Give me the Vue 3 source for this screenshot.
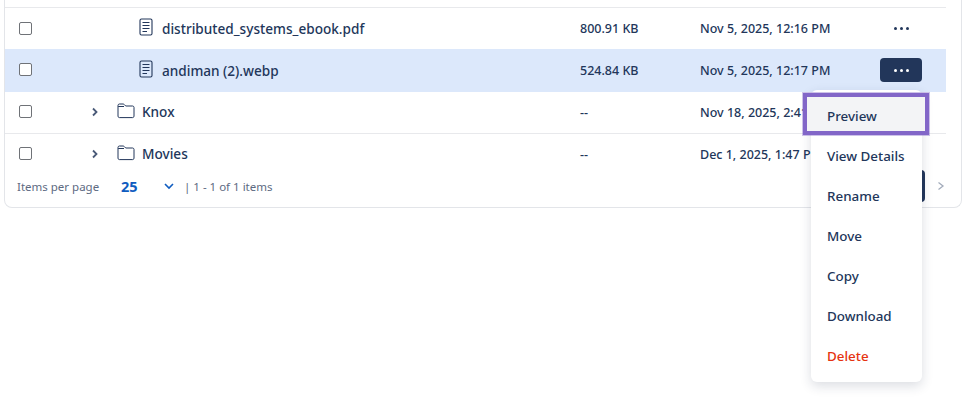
<template>
  <div class="page">
    <div class="card">
      <div class="rows">
        <div
          v-for="row in rows"
          :key="row.name"
          class="row"
          :class="{ selected: row.selected, folder: row.type === 'folder' }"
        >
          <span class="checkbox"></span>
          <div class="name-cell" :class="{ nested: row.type === 'file' }">
            <svg v-if="row.type === 'folder'" class="chevron" width="8" height="10" viewBox="0 0 8 10" fill="none">
              <path d="M2 1.5 5.5 5 2 8.5" stroke="#4a5a78" stroke-width="1.8" />
            </svg>
            <svg v-if="row.type === 'folder'" class="icon" width="18" height="16" viewBox="0 0 18 16" fill="none">
              <path d="M1 13.2V2.4C1 1.6 1.6 1 2.4 1h3.7c.4 0 .7.2 1 .4L8.7 3h6.9c.8 0 1.4.6 1.4 1.4v8.8c0 .8-.6 1.4-1.4 1.4H2.4c-.8 0-1.4-.6-1.4-1.4Z" stroke="#22365a" stroke-width="1" />
              <path d="M7 3.5H1.2" stroke="#22365a" stroke-width="1" />
            </svg>
            <svg v-else class="icon" width="14" height="18" viewBox="0 0 14 18" fill="none">
              <rect x="1" y="1" width="12" height="16" rx="1.5" stroke="#22365a" stroke-width="1.1" />
              <path d="M3.5 4.5h7M3.5 7.5h7M3.5 10.5h7M3.5 13.5h4.5" stroke="#22365a" stroke-width="1.1" />
            </svg>
            <span>{{ row.name }}</span>
          </div>
          <span class="size">{{ row.size }}</span>
          <span class="date">{{ row.date }}</span>
          <div class="actions">
            <button class="more" :class="{ active: row.selected }">
              <i></i><i></i><i></i>
            </button>
          </div>
        </div>
      </div>

      <div class="footer">
        <span class="per-page">Items per page</span>
        <span class="page-size">25</span>
        <svg class="select-arrow" width="12" height="8" viewBox="0 0 12 8" fill="none">
          <path d="M2 2 6 6 10 2" stroke="#0f5cc0" stroke-width="1.6" />
        </svg>
        <span class="count">| 1 - 1 of 1 items</span>
        <div class="pager">
          <span class="current"></span>
          <svg width="8" height="12" viewBox="0 0 8 12" fill="none">
            <path d="M1.5 2.5 6 6 1.5 9.5" stroke="#a3acbb" stroke-width="1.3" />
          </svg>
        </div>
      </div>
    </div>

    <ul class="menu">
      <li
        v-for="item in menuItems"
        :key="item"
        :class="{ hover: item === 'Preview', danger: item === 'Delete' }"
      >
        {{ item }}
      </li>
    </ul>
  </div>
</template>

<script setup>
const rows = [
  { name: 'distributed_systems_ebook.pdf', size: '800.91 KB', date: 'Nov 5, 2025, 12:16 PM', type: 'file' },
  { name: 'andiman (2).webp', size: '524.84 KB', date: 'Nov 5, 2025, 12:17 PM', type: 'file', selected: true },
  { name: 'Knox', size: '--', date: 'Nov 18, 2025, 2:41 PM', type: 'folder' },
  { name: 'Movies', size: '--', date: 'Dec 1, 2025, 1:47 PM', type: 'folder' }
]

const menuItems = ['Preview', 'View Details', 'Rename', 'Move', 'Copy', 'Download', 'Delete']
</script>

<style>
html,
body {
  background: #fff;
}
</style>

<style scoped>
.page {
  position: relative;
  width: 978px;
  height: 411px;
  overflow: hidden;
  font-family: "Noto Sans", "Liberation Sans", sans-serif;
  color: #22365a;
}

.card {
  width: 958px;
  height: 208px;
  margin-left: 4px;
  padding: 7px 15px 0 0;
  box-sizing: border-box;
  border: 1px solid #e3e5e9;
  border-top: 0;
  border-radius: 0 0 8px 8px;
}

.rows {
  border-top: 1px solid #e8e9ec;
}

.row {
  display: grid;
  grid-template-columns: 575px 120px 1fr 66px;
  height: 42px;
  box-sizing: border-box;
  align-items: center;
  position: relative;
  font-size: 13px;
  font-weight: 500;
}

.row:nth-child(1),
.row:nth-child(4) {
  height: 41px;
}

.row:nth-child(2) {
  height: 43px;
}

.row:nth-child(3) {
  border-bottom: 1px solid #e8e9ec;
}

.row.selected {
  background: #dce8fb;
}

.checkbox {
  position: absolute;
  left: 14px;
  top: 14px;
  width: 11px;
  height: 11px;
  border: 1px solid #6f7277;
  border-radius: 2px;
  background: #fff;
}

.row.folder .checkbox {
  top: 13px;
}

.name-cell {
  display: flex;
  align-items: center;
  padding-left: 86px;
  font-size: 13.6px;
}

.row.folder .name-cell {
  padding-bottom: 2px;
}

.name-cell.nested {
  padding-left: 134px;
}

.name-cell .chevron {
  margin-right: 18px;
}

.name-cell .icon {
  margin-right: 7px;
  position: relative;
  top: -1px;
}

.name-cell.nested .icon {
  margin-right: 9px;
  top: -2px;
}

.size {
  font-size: 12.5px;
}

.date {
  font-size: 12.5px;
  white-space: nowrap;
}

.actions {
  display: flex;
  justify-content: flex-start;
}

.more {
  width: 42px;
  height: 24px;
  display: flex;
  align-items: center;
  justify-content: center;
  gap: 3px;
  padding: 0;
  border: 0;
  border-radius: 4px;
  background: transparent;
  margin-top: -1px;
}

.more i {
  width: 3px;
  height: 3px;
  border-radius: 50%;
  background: #22365a;
}

.more.active {
  background: #22365a;
}

.more.active i {
  background: #fff;
}

.footer {
  display: flex;
  align-items: center;
  height: 22px;
  padding-left: 12px;
  font-size: 11.5px;
  color: #5d6a82;
  position: relative;
}

.per-page {
  width: 104px;
}

.page-size {
  width: 42px;
  font-size: 14.5px;
  font-weight: 700;
  color: #0f5cc0;
}

.select-arrow {
  margin-right: 9px;
}

.pager {
  margin-left: auto;
  display: flex;
  align-items: center;
  margin-right: 1px;
  gap: 12px;
}

.current {
  width: 32px;
  height: 32px;
  border-radius: 4px;
  background: #22365a;
}

.menu {
  position: absolute;
  left: 811px;
  top: 90px;
  width: 111px;
  margin: 0;
  padding: 6px 0;
  list-style: none;
  background: #fff;
  border-radius: 6px;
  box-shadow: 0 4px 12px rgba(30, 45, 75, 0.16);
}

.menu li {
  height: 40px;
  line-height: 40px;
  padding-left: 16px;
  font-size: 13.4px;
  font-weight: 500;
}

.menu li.hover {
  position: relative;
  z-index: 0;
}

/* purple focus frame, wider than the menu itself */
.menu li.hover::before {
  content: "";
  position: absolute;
  left: -8px;
  right: -7px;
  top: -3px;
  bottom: 1px;
  z-index: -1;
  background: #f3f4f6;
  border: 4px solid #8266c8;
  box-shadow: 0 0 0 1px rgba(130, 102, 200, 0.4);
}

.menu li.danger {
  color: #e5330f;
}
</style>
